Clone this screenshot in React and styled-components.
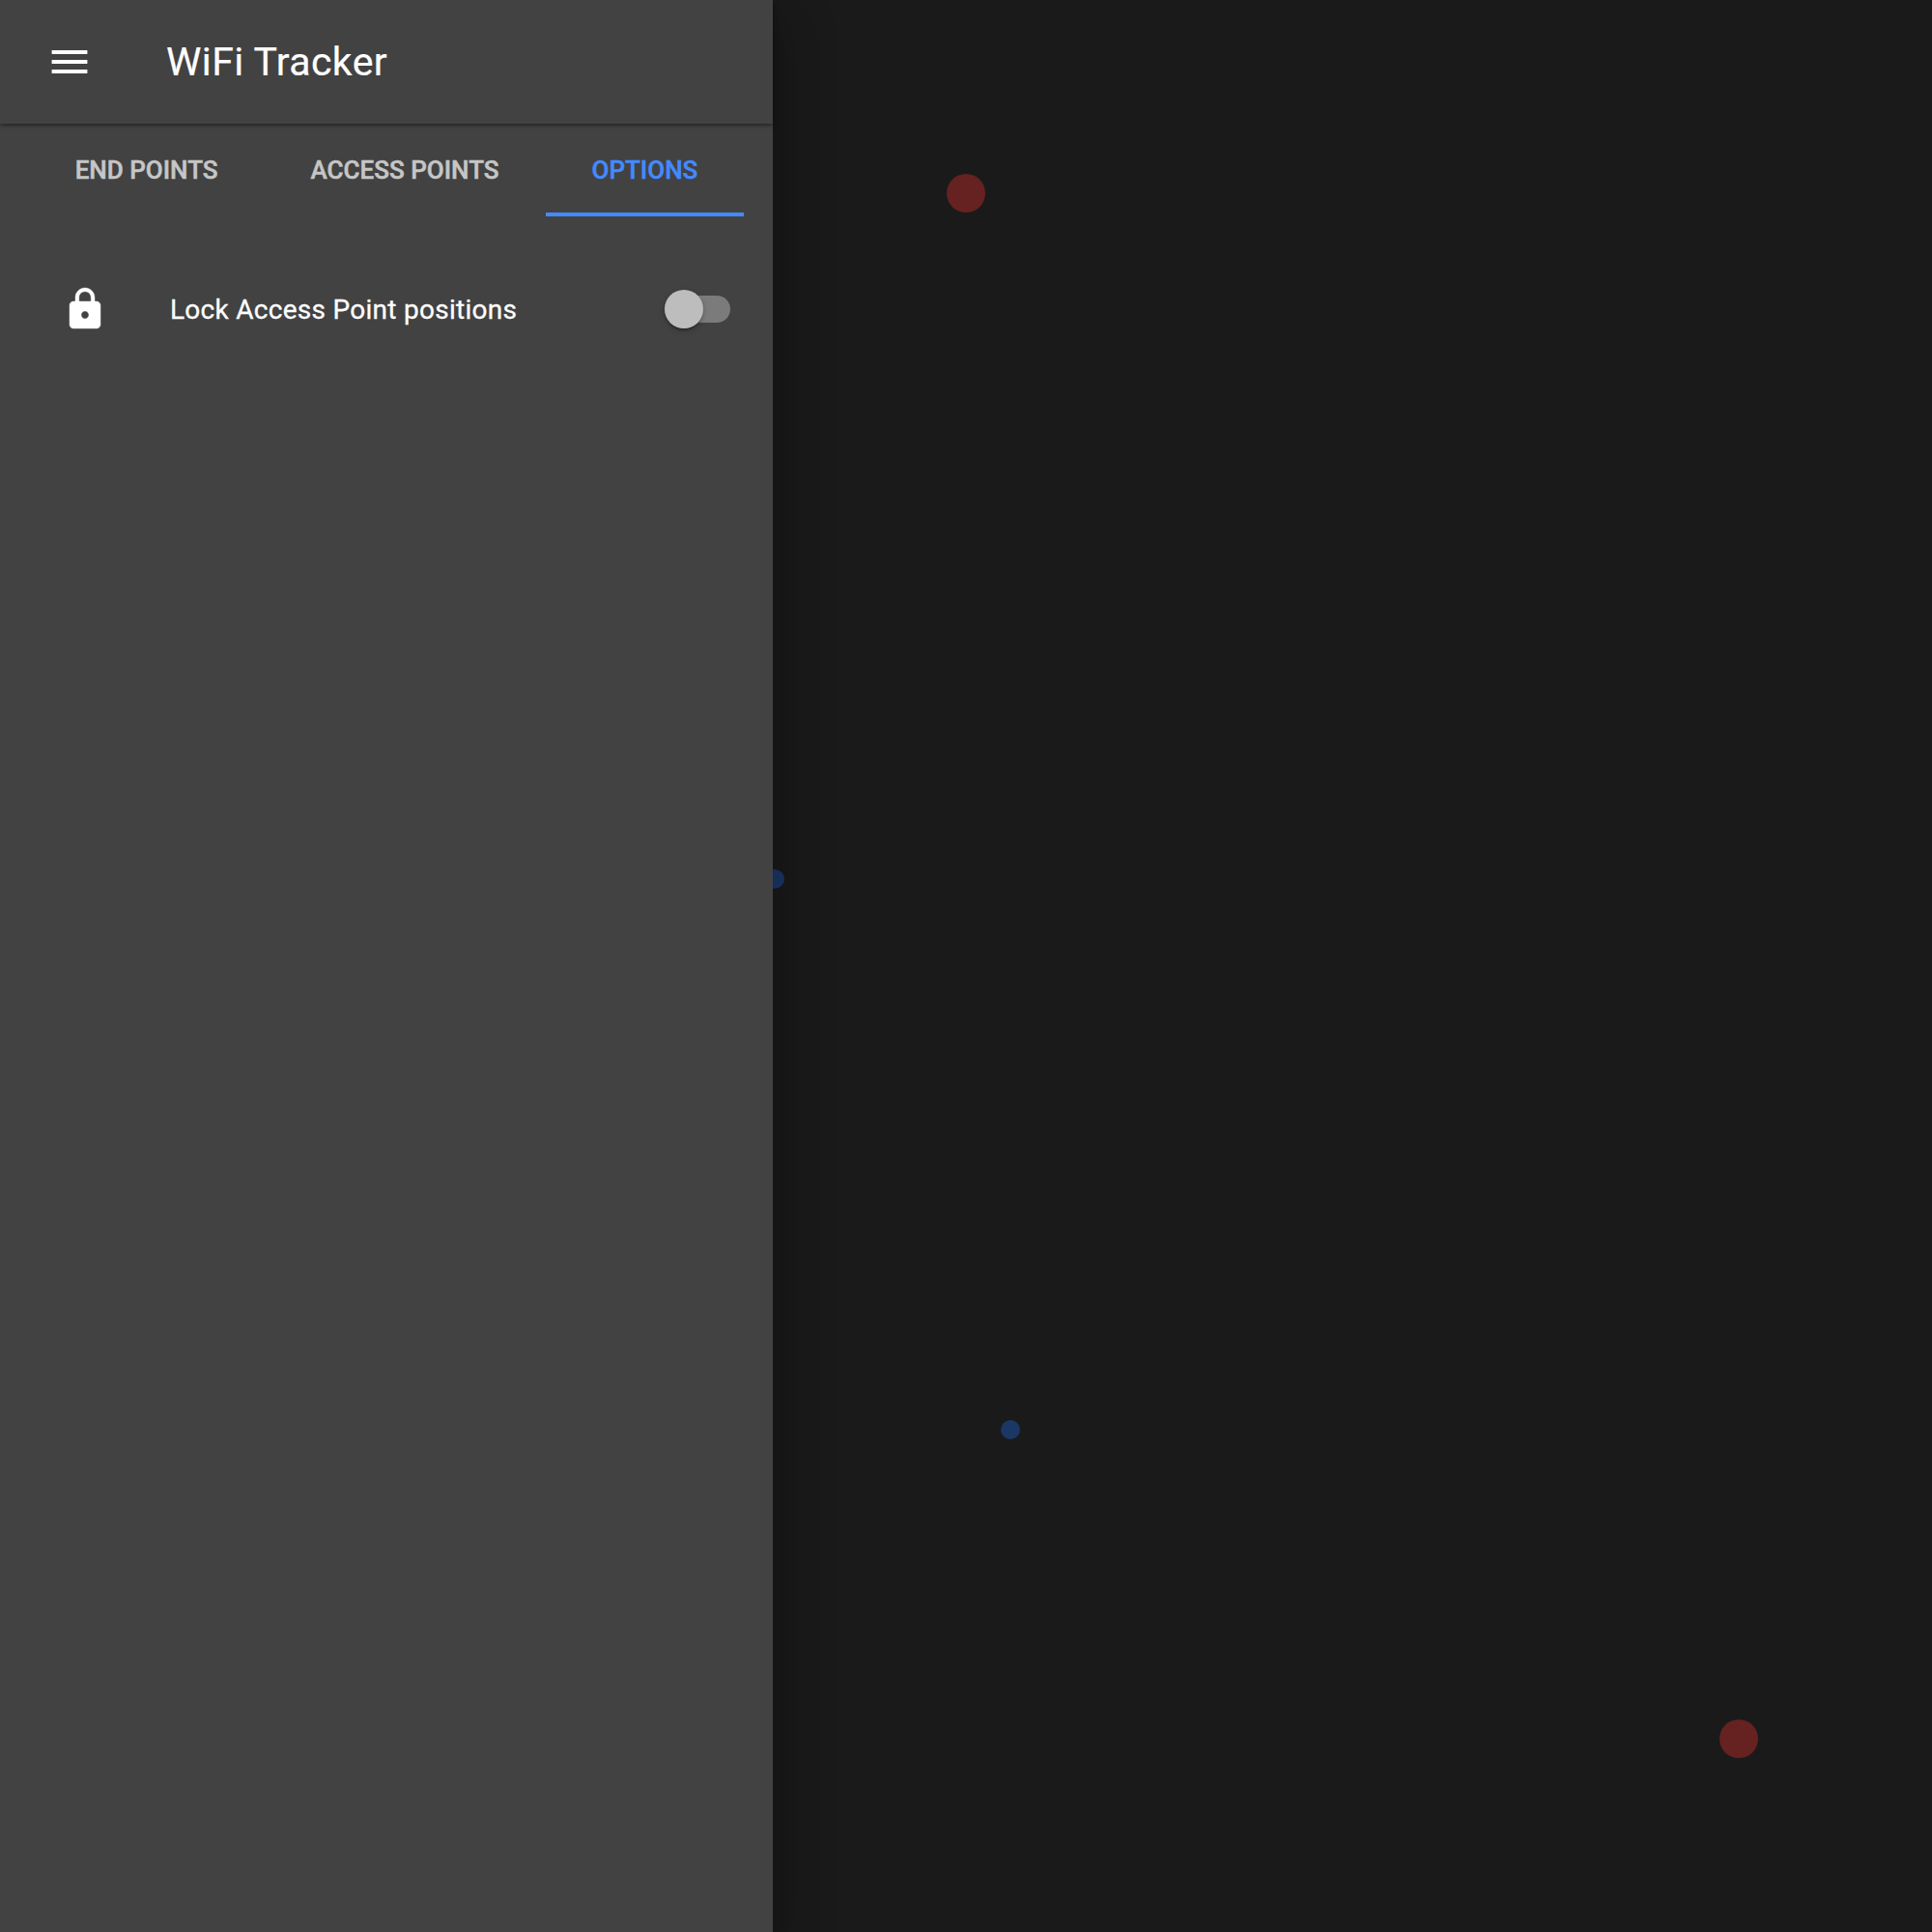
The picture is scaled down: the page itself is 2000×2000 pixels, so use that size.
import React from "react";
import styled, { createGlobalStyle } from "styled-components";

const GlobalStyle = createGlobalStyle`
  body {
    margin: 0;
    background: #1a1a1a;
    font-family: Roboto, "Noto Sans", sans-serif;
    -webkit-font-smoothing: antialiased;
  }
  *, *::before, *::after { box-sizing: border-box; }
`;

const Page = styled.div`
  display: flex;
  position: relative;
  width: 2000px;
  height: 2000px;
  overflow: hidden;
  background: #1a1a1a;
`;

const Node = styled.span`
  position: absolute;
  left: ${(p) => p.$x - p.$r}px;
  top: ${(p) => p.$y - p.$r}px;
  width: ${(p) => p.$r * 2}px;
  height: ${(p) => p.$r * 2}px;
  border-radius: 50%;
  background: ${(p) => p.$color};
`;

const Sidenav = styled.aside`
  position: relative;
  display: flex;
  flex-direction: column;
  width: 800px;
  height: 100%;
  background: #424242;
  color: #fff;
  box-shadow: 0 16px 20px -10px rgba(0, 0, 0, 0.2),
    0 32px 48px 4px rgba(0, 0, 0, 0.14), 0 12px 60px 10px rgba(0, 0, 0, 0.12);
`;

const Toolbar = styled.header`
  display: flex;
  align-items: center;
  height: 128px;
  padding: 0 32px;
  box-shadow: 0 2px 6px rgba(0, 0, 0, 0.2), 0 2px 2px rgba(0, 0, 0, 0.14),
    0 4px 2px -2px rgba(0, 0, 0, 0.12);
`;

const IconButton = styled.button`
  display: flex;
  padding: 16px;
  border: 0;
  background: none;
  color: inherit;
`;

const Icon = styled.svg`
  display: block;
  width: 48px;
  height: 48px;
  fill: currentColor;
`;

const Title = styled.h1`
  margin: 0 0 0 60px;
  padding-bottom: 1px;
  font-size: 41px;
  line-height: 52px;
  font-weight: 400;
  letter-spacing: 0.01em;
  -webkit-text-stroke: 0.2px currentColor;
`;

const Tabs = styled.nav`
  display: flex;
  justify-content: center;
  height: 96px;
`;

const Tab = styled.button`
  padding: 3px 48px 0;
  border: 0;
  border-bottom: 4px solid ${(p) => (p.$active ? "#448aff" : "transparent")};
  background: none;
  color: ${(p) => (p.$active ? "#448aff" : "#c6c6c6")};
  font: 500 26px/40px Roboto, sans-serif;
  text-transform: uppercase;
  -webkit-text-stroke: 0.5px currentColor;
`;

const List = styled.ul`
  margin: 0;
  padding: 48px 0;
  list-style: none;
`;

const ListItem = styled.li`
  display: flex;
  align-items: center;
  height: 96px;
  padding: 0 44px 0 64px;
`;

const Label = styled.span`
  flex: 1;
  margin-left: 64px;
  padding-top: 2px;
  font-size: 28px;
  line-height: 40px;
  letter-spacing: 0.01em;
  -webkit-text-stroke: 0.3px currentColor;
`;

const Track = styled.span`
  display: flex;
  align-items: center;
  width: 68px;
  height: 28px;
  border-radius: 14px;
  background: #7b7b7b;
`;

const Thumb = styled.span`
  flex: none;
  width: 40px;
  height: 40px;
  border-radius: 50%;
  background: #bdbdbd;
  box-shadow: 0 2px 6px rgba(0, 0, 0, 0.2), 0 2px 2px rgba(0, 0, 0, 0.14),
    0 4px 2px -2px rgba(0, 0, 0, 0.12);
`;

const nodes = [
  { x: 1000, y: 200, r: 20, color: "#662121" },
  { x: 1800, y: 1800, r: 20, color: "#662121" },
  { x: 802, y: 910, r: 10, color: "#1b3766" },
  { x: 1046, y: 1480, r: 10, color: "#1b3766" },
];

const tabs = ["End points", "Access points", "Options"];

export default function App() {
  return (
    <Page>
      <GlobalStyle />
      {nodes.map((n) => (
        <Node key={`${n.x}-${n.y}`} $x={n.x} $y={n.y} $r={n.r} $color={n.color} />
      ))}
      <Sidenav>
        <Toolbar>
          <IconButton aria-label="Menu">
            <Icon viewBox="0 0 24 24">
              <path d="M2.8 18h18.4v-2H2.8v2zm0-5h18.4v-2H2.8v2zm0-7v2h18.4V6H2.8z" />
            </Icon>
          </IconButton>
          <Title>WiFi Tracker</Title>
        </Toolbar>
        <Tabs>
          {tabs.map((t) => (
            <Tab key={t} $active={t === "Options"}>
              {t}
            </Tab>
          ))}
        </Tabs>
        <List>
          <ListItem>
            <Icon viewBox="0 0 24 24">
              <path
                stroke="currentColor"
                strokeWidth="0.2"
                d="M18 8h-1V6c0-2.76-2.24-5-5-5S7 3.24 7 6v2H6c-1.1 0-2 .9-2 2v10c0 1.1.9 2 2 2h12c1.1 0 2-.9 2-2V10c0-1.1-.9-2-2-2zm-6 9c-1.1 0-2-.9-2-2s.9-2 2-2 2 .9 2 2-.9 2-2 2zm3.1-9H8.9V6c0-1.71 1.39-3.1 3.1-3.1 1.71 0 3.1 1.39 3.1 3.1v2z"
              />
            </Icon>
            <Label>Lock Access Point positions</Label>
            <Track role="switch" aria-checked="false">
              <Thumb />
            </Track>
          </ListItem>
        </List>
      </Sidenav>
    </Page>
  );
}
